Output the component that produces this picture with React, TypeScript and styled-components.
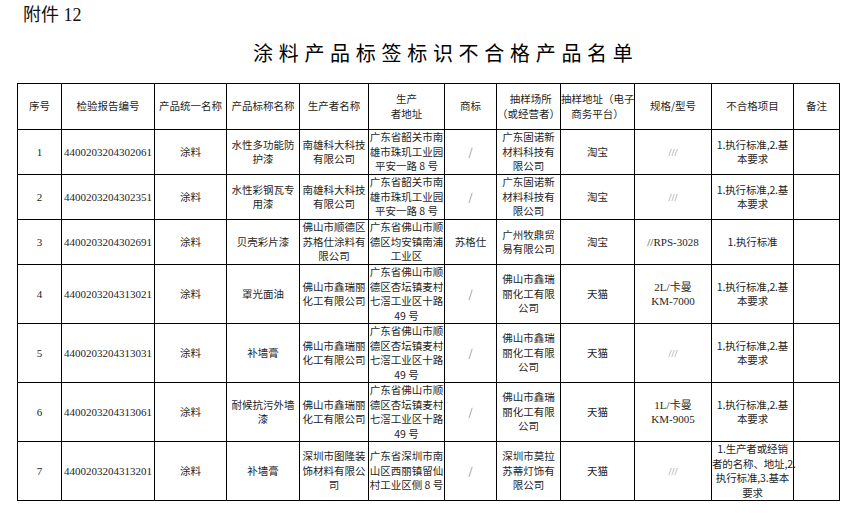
import React, { ReactElement } from 'react';
import styled, { createGlobalStyle } from 'styled-components';

type Row = {
  no: string;
  report: string;
  category: string;
  product: string[];
  producer: string[];
  address: string[];
  brand: string;
  seller: string[];
  platform: string;
  model: string[];
  fails: string[];
  height: number;
};

const ADDR_SG = ['广东省韶关市南', '雄市珠玑工业园', '平安一路 8 号'];
const ADDR_FS = ['广东省佛山市顺', '德区杏坛镇麦村', '七滘工业区十路', '49 号'];
const SELLER_GN = ['广东固诺新', '材料科技有', '限公司'];
const SELLER_XR = ['佛山市鑫瑞', '丽化工有限', '公司'];
const FAIL_2 = ['1.执行标准,2.基', '本要求'];

const rows: Row[] = [
  {
    no: '1', report: '4400203204302061', category: '涂料', product: ['水性多功能防', '护漆'],
    producer: ['南雄科大科技', '有限公司'], address: ADDR_SG, brand: '/', seller: SELLER_GN,
    platform: '淘宝', model: ['///'], fails: FAIL_2, height: 45,
  },
  {
    no: '2', report: '4400203204302351', category: '涂料', product: ['水性彩钢瓦专', '用漆'],
    producer: ['南雄科大科技', '有限公司'], address: ADDR_SG, brand: '/', seller: SELLER_GN,
    platform: '淘宝', model: ['///'], fails: FAIL_2, height: 45,
  },
  {
    no: '3', report: '4400203204302691', category: '涂料', product: ['贝壳彩片漆'],
    producer: ['佛山市顺德区', '苏格仕涂料有', '限公司'], address: ['广东省佛山市顺', '德区均安镇南浦', '工业区'],
    brand: '苏格仕', seller: ['广州牧鼎贸', '易有限公司'], platform: '淘宝', model: ['//RPS-3028'],
    fails: ['1.执行标准'], height: 45,
  },
  {
    no: '4', report: '4400203204313021', category: '涂料', product: ['罩光面油'],
    producer: ['佛山市鑫瑞丽', '化工有限公司'], address: ADDR_FS, brand: '/', seller: SELLER_XR,
    platform: '天猫', model: ['2L/卡曼', 'KM-7000'], fails: FAIL_2, height: 59,
  },
  {
    no: '5', report: '4400203204313031', category: '涂料', product: ['补墙膏'],
    producer: ['佛山市鑫瑞丽', '化工有限公司'], address: ADDR_FS, brand: '/', seller: SELLER_XR,
    platform: '天猫', model: ['///'], fails: FAIL_2, height: 59,
  },
  {
    no: '6', report: '4400203204313061', category: '涂料', product: ['耐候抗污外墙', '漆'],
    producer: ['佛山市鑫瑞丽', '化工有限公司'], address: ADDR_FS, brand: '/', seller: SELLER_XR,
    platform: '天猫', model: ['1L/卡曼', 'KM-9005'], fails: FAIL_2, height: 59,
  },
  {
    no: '7', report: '4400203204313201', category: '涂料', product: ['补墙膏'],
    producer: ['深圳市图隆装', '饰材料有限公', '司'], address: ['广东省深圳市南', '山区西丽镇留仙', '村工业区侧 8 号'],
    brand: '/', seller: ['深圳市莫拉', '苏蒂灯饰有', '限公司'], platform: '天猫', model: ['///'],
    fails: ['1.生产者或经销', '者的名称、地址,2.', '执行标准,3.基本', '要求'], height: 58,
  },
];

const colWidths = [44, 93, 72, 73, 69, 76, 52, 64, 74, 77, 82, 46];

const headers: string[][] = [
  ['序号'], ['检验报告编号'], ['产品统一名称'], ['产品标称名称'], ['生产者名称'],
  ['生产', '者地址'], ['商标'], ['\u00a0\u00a0抽样场所', '（或经营者）'], ['抽样地址（电子', '商务平台）'],
  ['规格/型号'], ['不合格项目'], ['备注'],
];

const Lines = ({ lines }: { lines: string[] }): ReactElement => (
  <>
    {lines.map((l, i) => (
      <React.Fragment key={i}>
        {i > 0 && <br />}
        {l}
      </React.Fragment>
    ))}
  </>
);

const App: React.FC = (): ReactElement => (
  <>
    <GlobalStyle />
    <Page>
      <Annex>附件 12</Annex>
      <Title>涂料产品标签标识不合格产品名单</Title>
      <Table>
        <colgroup>
          {colWidths.map((w, i) => (
            <col key={i} style={{ width: w }} />
          ))}
        </colgroup>
        <thead>
          <HeadRow>
            {headers.map((h, i) => (
              <Cell key={i}>
                <Lines lines={h} />
              </Cell>
            ))}
          </HeadRow>
        </thead>
        <tbody>
          {rows.map((r) => (
            <BodyRow key={r.no} h={r.height}>
              <Cell serif>{r.no}</Cell>
              <Cell serif>{r.report}</Cell>
              <Cell>{r.category}</Cell>
              <Cell><Lines lines={r.product} /></Cell>
              <Cell><Lines lines={r.producer} /></Cell>
              <Cell><Lines lines={r.address} /></Cell>
              <Cell muted={r.brand === '/'}>{r.brand}</Cell>
              <Cell><Lines lines={r.seller} /></Cell>
              <Cell>{r.platform}</Cell>
              <Cell serif muted={r.model[0] === '///'}><Lines lines={r.model} /></Cell>
              <Cell tight><Lines lines={r.fails} /></Cell>
              <Cell />
            </BodyRow>
          ))}
        </tbody>
      </Table>
    </Page>
  </>
);

const GlobalStyle = createGlobalStyle`
  html, body {
    margin: 0;
    padding: 0;
    background: #ffffff;
  }
  body {
    font-family: "Noto Sans CJK SC", sans-serif;
    color: #1e1e1e;
  }
`;

const Page = styled.div`
  width: 853px;
  height: 513px;
  overflow: hidden;
  display: flex;
  flex-direction: column;
  padding: 4px 0 0 17px;
  box-sizing: border-box;
`;

const Annex = styled.div`
  font-family: "Liberation Serif", "Noto Sans CJK SC", serif;
  font-size: 18px;
  line-height: 22px;
  padding-left: 6px;
  color: #111;
`;

const Title = styled.div`
  margin-top: 15px;
  padding-left: 236px;
  font-family: "Noto Sans CJK SC", sans-serif;
  font-size: 20px;
  line-height: 24px;
  letter-spacing: 5.7px;
  font-weight: 400;
  color: #000;
`;

const Table = styled.table`
  margin-top: 18px;
  width: 822px;
  table-layout: fixed;
  border-collapse: collapse;
  font-size: 10.5px;
  line-height: 14.5px;
`;

const HeadRow = styled.tr`
  height: 46px;
`;

const BodyRow = styled.tr<{ h: number }>`
  height: ${({ h }) => h}px;
`;

const Cell = styled.td<{ serif?: boolean; muted?: boolean; tight?: boolean }>`
  border: 1px solid #000;
  padding: 0;
  text-align: center;
  vertical-align: middle;
  white-space: nowrap;
  overflow: visible;
  letter-spacing: ${({ tight }) => (tight ? '-0.15px' : 'normal')};
  font-family: ${({ serif }) =>
    serif ? '"Liberation Serif", "Noto Sans CJK SC", serif' : '"Noto Sans CJK SC", sans-serif'};
  font-size: ${({ serif }) => (serif ? '11px' : '10.5px')};
  color: ${({ muted }) => (muted ? '#8a8a8a' : '#1e1e1e')};
`;

export default App;
